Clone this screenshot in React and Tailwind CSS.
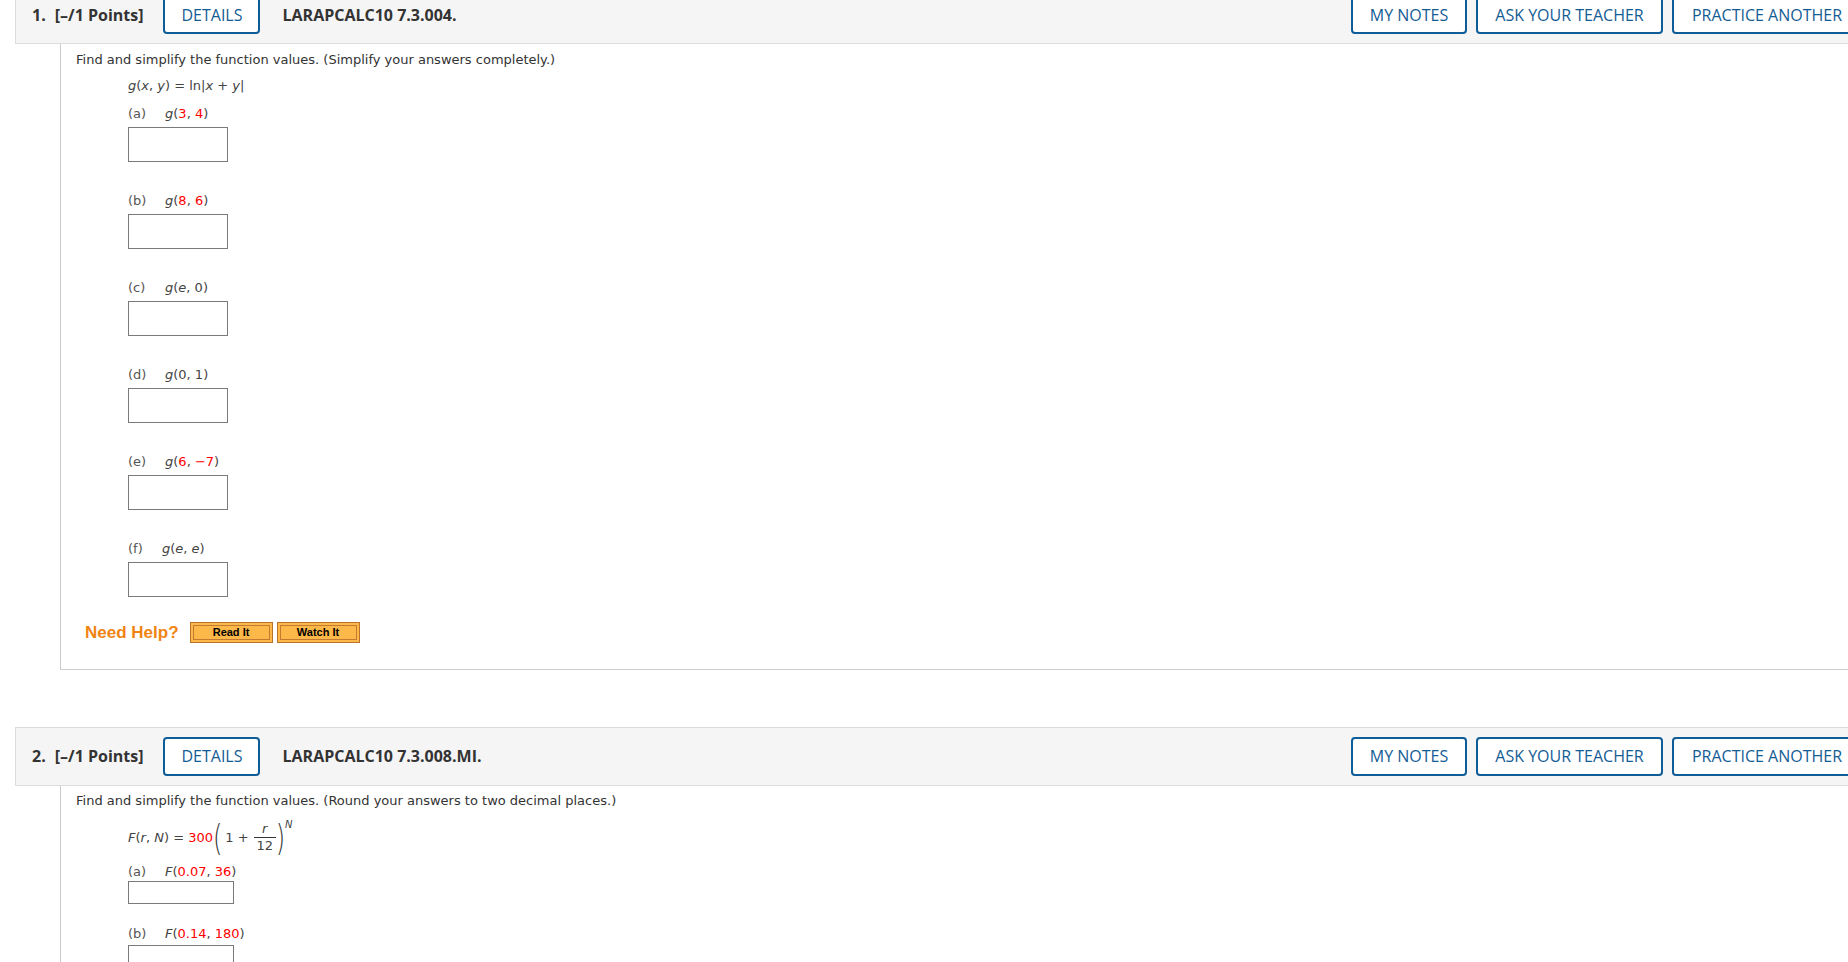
import React from "react";

const HEAD_FONT = "font-['Open_Sans','Liberation_Sans',sans-serif]";
const BODY_FONT = "font-['DejaVu_Sans','Liberation_Sans',sans-serif]";

const Red = ({ children }) => <span className="text-[#ff0000]">{children}</span>;

const OutlineButton = ({ children, w }) => (
  <button
    type="button"
    className={`h-[39px] ${w} shrink-0 rounded-[4px] border-2 border-[#0e5d98] bg-white text-[16px] text-[#145c94] ${HEAD_FONT}`}
  >
    {children}
  </button>
);

const QuestionHeader = ({ num, code }) => (
  <div className={`flex h-[59px] items-center border border-[#dcdcdc] bg-[#f5f5f5] pl-[16px] pr-[10px] ${HEAD_FONT}`}>
    <span className="text-[16px] font-bold text-[#333]">{num}.</span>
    <span className="ml-[9px] text-[16px] font-bold text-[#333]">[–/1 Points]</span>
    <div className="ml-[20px]">
      <OutlineButton w="w-[97px]">DETAILS</OutlineButton>
    </div>
    <span className="ml-[22px] text-[16px] font-bold text-[#333]">{code}</span>
    <div className="ml-auto flex gap-[9px]">
      <OutlineButton w="w-[116px]">MY NOTES</OutlineButton>
      <OutlineButton w="w-[187px]">ASK YOUR TEACHER</OutlineButton>
      <OutlineButton w="w-[190px]">PRACTICE ANOTHER</OutlineButton>
    </div>
  </div>
);

// одна часть задания: подпись + поле ввода
const Part = ({ letter, children, box = "h-[35px] w-[100px]", first }) => (
  <div className={first ? "mt-[8px]" : "mt-[29px]"}>
    <div className="h-[20px] leading-[20px] text-[#444]">
      <span className="inline-block w-[37px] text-[#555]">({letter})</span>
      {children}
    </div>
    <div className={`mt-[3px] border border-[#7a7a7a] bg-white ${box}`} />
  </div>
);

const HelpButton = ({ children }) => (
  <button
    type="button"
    className="h-[21px] w-[83px] border border-[#b9722b] bg-[#fdb84a] p-[2px] font-['Liberation_Sans',Arial,sans-serif]"
  >
    <span className="flex h-full w-full items-center justify-center border border-[#c47a30] text-[11px] font-bold leading-none text-black">
      {children}
    </span>
  </button>
);

const Paren = ({ children }) => (
  <span className="inline-block origin-center scale-y-[1.5] text-[24px] font-extralight leading-none text-[#333]">
    {children}
  </span>
);

export default function App() {
  return (
    <div className={`h-[962px] w-full overflow-hidden bg-white ${BODY_FONT}`}>
      <div className="ml-[15px] mt-[-15px] w-[1858px]">
        {/* вопрос 1 */}
        <QuestionHeader num="1" code="LARAPCALC10 7.3.004." />
        <div className="ml-[45px] border-b border-l border-[#cccccc] pb-[23px] pl-[15px] pt-[6px] text-[13px] text-[#333]">
          <p className="h-[20px] leading-[20px]">
            Find and simplify the function values. (Simplify your answers completely.)
          </p>
          <div className="ml-[52px]">
            <div className="mt-[6px] h-[20px] leading-[20px] text-[#444]">
              <i>g</i>(<i>x</i>, <i>y</i>) = ln|<i>x</i> + <i>y</i>|
            </div>
            <Part letter="a" first>
              <i>g</i>(<Red>3</Red>, <Red>4</Red>)
            </Part>
            <Part letter="b">
              <i>g</i>(<Red>8</Red>, <Red>6</Red>)
            </Part>
            <Part letter="c">
              <i>g</i>(<i>e</i>, 0)
            </Part>
            <Part letter="d">
              <i>g</i>(0, 1)
            </Part>
            <Part letter="e">
              <i>g</i>(<Red>6</Red>, <Red>−7</Red>)
            </Part>
            <Part letter="f">
              <span className="-ml-[3px]">
                <i>g</i>(<i>e</i>, <i>e</i>)
              </span>
            </Part>
          </div>
          <div className="ml-[9px] mt-[23px] flex items-center gap-[4px]">
            <span className="mr-[7px] font-['Liberation_Sans',Arial,sans-serif] text-[17px] font-bold text-[#ef8412]">
              Need Help?
            </span>
            <HelpButton>Read It</HelpButton>
            <HelpButton>Watch It</HelpButton>
          </div>
        </div>

        {/* вопрос 2 */}
        <div className="mt-[57px]">
          <QuestionHeader num="2" code="LARAPCALC10 7.3.008.MI." />
        </div>
        <div className="ml-[45px] border-l border-[#cccccc] pb-[40px] pl-[15px] pt-[5px] text-[13px] text-[#333]">
          <p className="h-[20px] leading-[20px]">
            Find and simplify the function values. (Round your answers to two decimal places.)
          </p>
          <div className="ml-[52px]">
            <div className="mt-[8px] flex h-[38px] items-center text-[#444]">
              <span>
                <i>F</i>(<i>r</i>, <i>N</i>) = <Red>300</Red>
              </span>
              <Paren>(</Paren>
              <span className="ml-[3px]">1 +</span>
              <span className="ml-[5px] inline-flex flex-col items-center text-[13px] leading-[16px]">
                <span className="w-[22px] border-b border-[#333] text-center italic">r</span>
                <span>12</span>
              </span>
              <Paren>)</Paren>
              <span className="mb-[26px] text-[10px] italic">N</span>
            </div>
            <div className="mt-[5px]">
              <div className="h-[20px] leading-[20px] text-[#444]">
                <span className="inline-block w-[37px] text-[#555]">(a)</span>
                <i>F</i>(<Red>0.07</Red>, <Red>36</Red>)
              </div>
              <div className="mt-[-1px] h-[23px] w-[106px] border border-[#7a7a7a] bg-white" />
            </div>
            <div className="mt-[20px]">
              <div className="h-[20px] leading-[20px] text-[#444]">
                <span className="inline-block w-[37px] text-[#555]">(b)</span>
                <i>F</i>(<Red>0.14</Red>, <Red>180</Red>)
              </div>
              <div className="mt-[1px] h-[23px] w-[106px] border border-[#7a7a7a] bg-white" />
            </div>
          </div>
        </div>
      </div>
    </div>
  );
}
